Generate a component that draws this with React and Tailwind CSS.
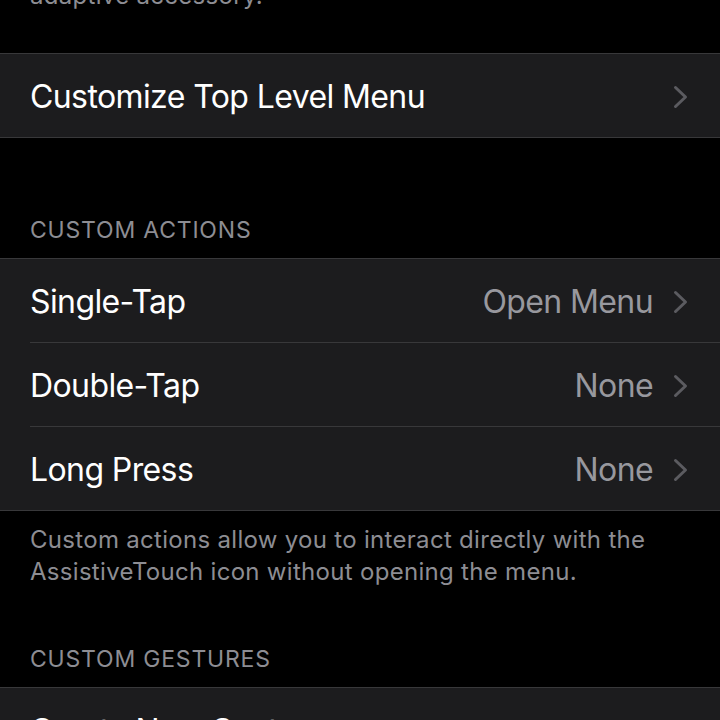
const Chevron = () => (
  <svg width="15" height="24" viewBox="0 0 15 24" className="shrink-0">
    <polyline
      points="2.5,2.5 12.5,12 2.5,21.5"
      fill="none"
      stroke="#5b5b60"
      strokeWidth="3"
      strokeLinecap="round"
      strokeLinejoin="round"
    />
  </svg>
)

function Row({ label, value, last }) {
  return (
    <div className="relative flex h-[83px] items-center bg-[#1c1c1e] pl-[30px] pr-[32px] pt-[3px] text-[32px] tracking-[-0.6px]">
      <span className="flex-1 text-white">{label}</span>
      {value && <span className="mr-[20px] text-[#98989e]">{value}</span>}
      <Chevron />
      {!last && <div className="absolute bottom-[-1px] left-[30px] right-0 h-px bg-[#38383a]" />}
    </div>
  )
}

function Group({ children }) {
  return (
    <div className="flex flex-col gap-px border-y border-[#38383a] bg-[#1c1c1e]">{children}</div>
  )
}

function Header({ children, pt }) {
  return (
    <div className={`${pt} px-[30px] pb-[14px] text-[23px] leading-[28px] tracking-[0.8px] text-[#8d8d93]`}>
      {children}
    </div>
  )
}

export default function App() {
  return (
    <div
      className="h-[720px] w-[720px] overflow-hidden bg-black"
      style={{ fontFamily: 'Inter, "Noto Sans", sans-serif' }}
    >
      <div className="-mt-[20px] px-[30px] pb-[41px] text-[24px] leading-[32px] tracking-[0.3px] text-[#8d8d93]">
        adaptive accessory.
      </div>

      <Group>
        <Row label="Customize Top Level Menu" last />
      </Group>

      <Header pt="pt-[78px]">CUSTOM ACTIONS</Header>
      <Group>
        <Row label="Single-Tap" value="Open Menu" />
        <Row label="Double-Tap" value="None" />
        <Row label="Long Press" value="None" last />
      </Group>

      <div className="px-[30px] pt-[13px] text-[24px] leading-[32px] tracking-[0.3px] text-[#8d8d93]">
        Custom actions allow you to interact directly with the AssistiveTouch icon without
        opening the menu.
      </div>

      <Header pt="pt-[57px]">CUSTOM GESTURES</Header>
      <Group>
        <Row label="Create New Gesture…" last />
      </Group>
    </div>
  )
}
